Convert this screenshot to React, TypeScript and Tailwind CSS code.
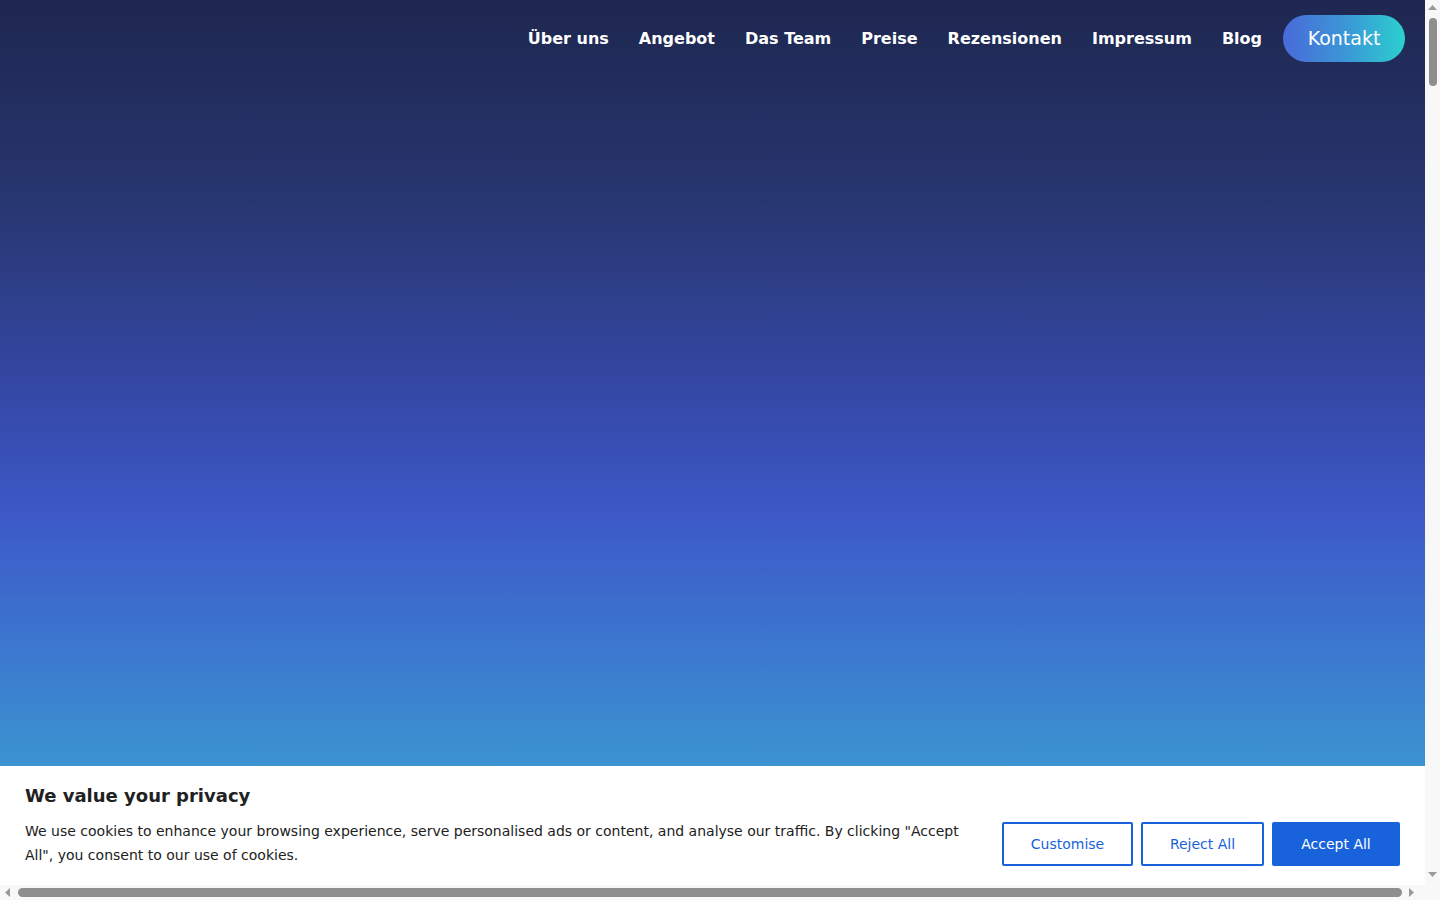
const navLinks = ["Über uns", "Angebot", "Das Team", "Preise", "Rezensionen", "Impressum", "Blog"]

function Header() {
  return (
    <header className="flex h-[77px] items-center justify-end pr-[20px]">
      <nav className="flex items-center">
        {navLinks.map((link) => (
          <a key={link} href="#" className="px-[15px] text-[16px] font-bold leading-none text-white">
            {link}
          </a>
        ))}
        <a
          href="#"
          className="ml-[6px] flex h-[47px] w-[122px] items-center justify-center rounded-full bg-[linear-gradient(90deg,#4a6ad9_0%,#3a9ad6_55%,#2bd0cf_100%)] text-[19px] text-white"
        >
          Kontakt
        </a>
      </nav>
    </header>
  )
}

function CookieBanner() {
  return (
    <div className="absolute inset-x-0 bottom-0 bg-white px-[25px] pb-[18px] pt-[18px]">
      <p className="text-[18px] font-bold leading-[24px] text-[#212121]">We value your privacy</p>
      <div className="mt-[11px] flex items-center">
        <p className="flex-1 text-[14px] leading-[24px] text-[#212121]">
          We use cookies to enhance your browsing experience, serve personalised ads or content, and analyse our traffic. By clicking "Accept All", you consent to our use of cookies.
        </p>
        <div className="ml-[36px] mt-[2px] flex gap-[8px]">
          <button className="h-[44px] w-[131px] rounded-[2px] border-2 border-[#1863dc] text-[14px] text-[#1863dc]">Customise</button>
          <button className="h-[44px] w-[123px] rounded-[2px] border-2 border-[#1863dc] text-[14px] text-[#1863dc]">Reject All</button>
          <button className="h-[44px] w-[128px] rounded-[2px] border-2 border-[#1863dc] bg-[#1863dc] text-[14px] text-white">Accept All</button>
        </div>
      </div>
    </div>
  )
}

function Arrow({ dir }: { dir: "up" | "down" | "left" | "right" }) {
  const points = {
    up: "0,5 4.5,0 9,5",
    down: "0,0 4.5,5 9,0",
    left: "5,0 0,4.5 5,9",
    right: "0,0 5,4.5 0,9",
  }[dir]
  const vertical = dir === "up" || dir === "down"
  return (
    <svg width={vertical ? 9 : 5} height={vertical ? 5 : 9} viewBox={vertical ? "0 0 9 5" : "0 0 5 9"}>
      <polygon points={points} fill="#9a9a9a" />
    </svg>
  )
}

// classic window scrollbars
function VerticalScrollbar() {
  return (
    <div className="flex w-[15px] flex-col items-center bg-[#f8f8f8]">
      <div className="flex h-[15px] items-center justify-center">
        <Arrow dir="up" />
      </div>
      <div className="mt-[3px] h-[68px] w-[8px] rounded-full bg-[#8e8e8e]" />
      <div className="flex-1" />
      <div className="flex h-[18px] items-center justify-center pb-[3px]">
        <Arrow dir="down" />
      </div>
    </div>
  )
}

function HorizontalScrollbar() {
  return (
    <div className="flex h-[15px] items-center bg-[#f8f8f8]">
      <div className="flex w-[15px] justify-center">
        <Arrow dir="left" />
      </div>
      <div className="ml-[3px] h-[9px] w-[1384px] rounded-full bg-[#8e8e8e]" />
      <div className="flex w-[15px] justify-center pl-[4px]">
        <Arrow dir="right" />
      </div>
      <div className="w-[15px]" />
    </div>
  )
}

export default function App() {
  return (
    <div className="flex h-[900px] w-[1440px] flex-col overflow-hidden font-['DejaVu_Sans',sans-serif]">
      <div className="flex h-[885px]">
        <main className="relative flex-1 overflow-hidden">
          <section className="h-[900px] bg-[linear-gradient(180deg,#1e2750_0px,#283670_200px,#3549a8_400px,#3d5ac8_520px,#3c76cf_640px,#3b92d0_760px,#3aa8d2_900px)]">
            <Header />
          </section>
          <CookieBanner />
        </main>
        <VerticalScrollbar />
      </div>
      <HorizontalScrollbar />
    </div>
  )
}
